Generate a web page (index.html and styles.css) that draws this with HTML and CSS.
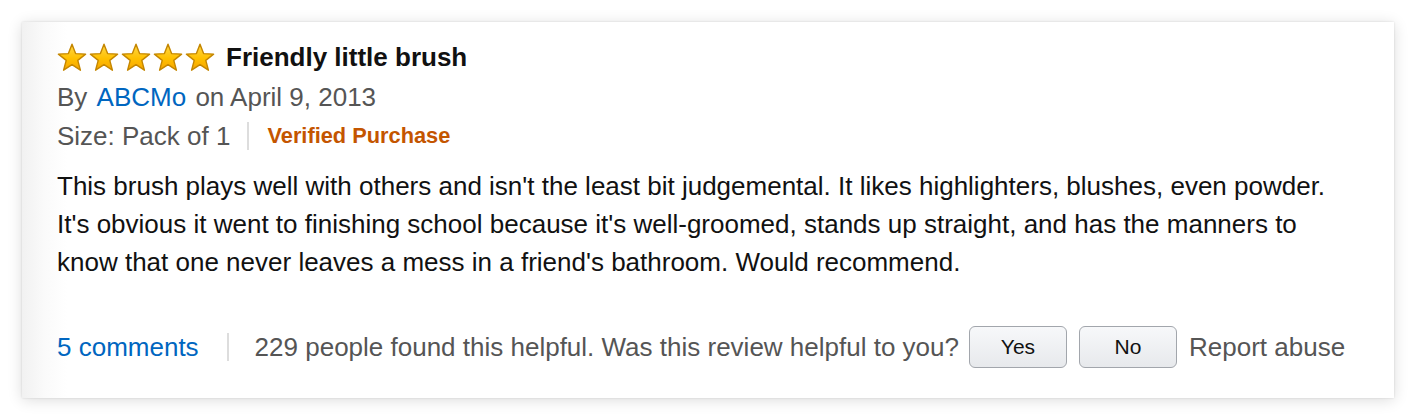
FILE: index.html
```html
<!DOCTYPE html>
<html lang="en">
<head>
<meta charset="utf-8">
<title>Review</title>
<link rel="stylesheet" href="styles.css">
</head>
<body>
<svg width="0" height="0" class="defs" aria-hidden="true">
  <defs>
    <linearGradient id="starfill" x1="0" y1="0" x2="0" y2="1">
      <stop offset="0" stop-color="#ffd84a"/>
      <stop offset="0.55" stop-color="#ffc000"/>
      <stop offset="1" stop-color="#f7a500"/>
    </linearGradient>
    <symbol id="star" viewBox="0 0 30 29">
      <path d="M15 1.2 L18.6 10.6 L28.6 11.1 L20.8 17.4 L23.4 27.2 L15 21.7 L6.6 27.2 L9.2 17.4 L1.4 11.1 L11.4 10.6 Z" fill="url(#starfill)" stroke="#c48600" stroke-width="1.4" stroke-linejoin="round"/>
    </symbol>
  </defs>
</svg>
<div class="review">
  <div class="title-row">
    <span class="stars" aria-label="5.0 out of 5 stars">
      <svg class="star"><use href="#star"/></svg>
      <svg class="star"><use href="#star"/></svg>
      <svg class="star"><use href="#star"/></svg>
      <svg class="star"><use href="#star"/></svg>
      <svg class="star"><use href="#star"/></svg>
    </span>
    <span class="title">Friendly little brush</span>
  </div>
  <div class="byline">By <a class="link author" href="#">ABCMo</a> on April 9, 2013</div>
  <div class="meta-row">
    <span class="size">Size: Pack of 1</span>
    <span class="divider"></span>
    <span class="verified">Verified Purchase</span>
  </div>
  <p class="body">This brush plays well with others and isn't the least bit judgemental. It likes highlighters, blushes, even powder. It's obvious it went to finishing school because it's well-groomed, stands up straight, and has the manners to know that one never leaves a mess in a friend's bathroom. Would recommend.</p>
  <div class="footer">
    <a class="link comments" href="#">5 comments</a>
    <span class="divider tall"></span>
    <span class="helpful">229 people found this helpful. Was this review helpful to you?</span>
    <button class="btn">Yes</button>
    <button class="btn">No</button>
    <span class="report">Report abuse</span>
  </div>
</div>
</body>
</html>
```
FILE: styles.css
```css
html, body {
  margin: 0;
  padding: 0;
  background: #ffffff;
}
body {
  padding: 22px;
  font-family: "Liberation Sans", Arial, sans-serif;
  font-size: 26px;
  line-height: 38px;
  color: #111111;
}
.defs {
  position: absolute;
  width: 0;
  height: 0;
}
.review {
  width: 1372px;
  height: 376px;
  box-sizing: border-box;
  padding: 16px 35px 0 35px;
  background: linear-gradient(to right, #f1f1f1 0px, #fafafa 22px, #ffffff 45px);
  box-shadow: 0 0 2px rgba(0,0,0,0.12), 0 2px 14px rgba(0,0,0,0.14);
}
.title-row {
  display: flex;
  align-items: center;
  height: 38px;
}
.stars {
  display: flex;
  gap: 2px;
  margin-right: 11px;
}
.star {
  width: 30px;
  height: 29px;
  display: block;
}
.title {
  font-weight: bold;
  color: #111;
}
.byline {
  margin-top: 2px;
  color: #555555;
}
.link {
  color: #0066c0;
  text-decoration: none;
}
.author {
  margin: 0 2px 0 2px;
}
.meta-row {
  display: flex;
  align-items: center;
  height: 38px;
  margin-top: 1px;
  color: #555555;
}
.divider {
  display: inline-block;
  width: 2px;
  height: 28px;
  background: #dddddd;
  margin: 0 18px 0 17px;
}
.verified {
  color: #c45500;
  font-weight: bold;
  font-size: 21.8px;
}
.body {
  margin: 12px 0 0 0;
  color: #111111;
}
.footer {
  display: flex;
  align-items: center;
  margin-top: 45px;
  height: 42px;
  color: #555555;
}
.divider.tall {
  margin: 0 26px 0 28px;
}
.btn {
  font-family: "Liberation Sans", Arial, sans-serif;
  font-size: 21px;
  color: #111;
  width: 98px;
  height: 42px;
  margin-left: 10px;
  border: 1.5px solid #a2a6ac;
  border-radius: 6px;
  background: linear-gradient(to bottom, #f7f8fa, #e7e9ec);
  padding: 0;
}
.btn + .btn {
  margin-left: 12px;
}
.report {
  margin-left: 12px;
}
```
